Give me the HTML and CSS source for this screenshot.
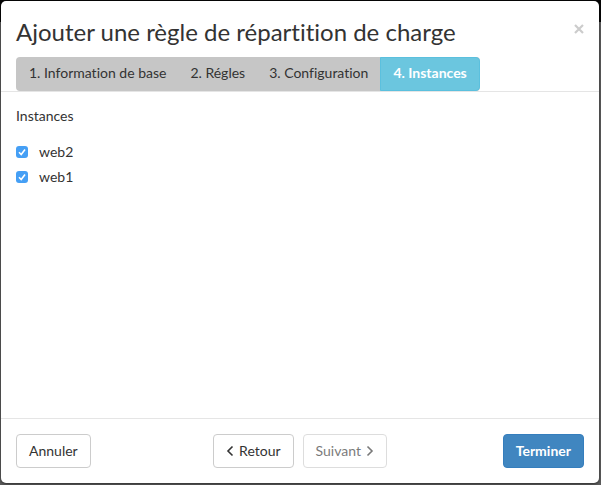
FILE: index.html
```html
<!DOCTYPE html>
<html lang="fr">
<head>
<meta charset="utf-8">
<title>Ajouter une règle de répartition de charge</title>
<link rel="stylesheet" href="styles.css">
</head>
<body>
<form class="modal" role="dialog" aria-labelledby="title">
  <header class="modal-header">
    <div class="title-row">
      <h1 id="title">Ajouter une règle de répartition de charge</h1>
      <button type="button" class="close" aria-label="Fermer"><svg width="10" height="10" viewBox="0 0 10 10"><path d="M1 1l8 8M9 1l-8 8"/></svg></button>
    </div>
    <ol class="steps">
      <li>1. Information de base</li>
      <li>2. Régles</li>
      <li>3. Configuration</li>
      <li class="active" aria-current="step">4. Instances</li>
    </ol>
  </header>
  <fieldset class="modal-body">
    <legend>Instances</legend>
    <label class="choice"><input type="checkbox" checked>web2</label>
    <label class="choice"><input type="checkbox" checked>web1</label>
  </fieldset>
  <footer class="modal-footer">
    <button type="button" class="btn">Annuler</button>
    <div class="pager">
      <button type="button" class="btn"><svg width="8" height="12" viewBox="0 0 8 12"><path d="M6.5 1.5L2 6l4.500 4.500"/></svg>Retour</button>
      <button type="button" class="btn" disabled>Suivant<svg width="8" height="12" viewBox="0 0 8 12"><path d="M1.500 1.500L6 6l-4.500 4.500"/></svg></button>
    </div>
    <button type="submit" class="btn primary">Terminer</button>
  </footer>
</form>
</body>
</html>
```
FILE: styles.css
```css
* { box-sizing: border-box; }
body {
  margin: 0;
  min-height: 100vh;
  padding: 1px 2px 2px 1px;
  display: flex;
  background: linear-gradient(#050506 22px, #5c5c5c 22px);
  color: #333;
  font: 14px/20px Lato, "Liberation Sans", sans-serif;
  font-variant-ligatures: none;
}
.modal {
  flex: 1;
  display: flex;
  flex-direction: column;
  background: #fff;
  border-radius: 5px;
  box-shadow: 0 1px 3px rgba(0, 0, 0, .5);
}
.modal-header {
  padding: 15px 15px 0;
  border-bottom: 1px solid #e5e5e5;
}
.title-row {
  display: flex;
  justify-content: space-between;
  align-items: flex-start;
  margin-bottom: 9px;
}
h1 {
  margin: 0;
  font-size: 24px;
  line-height: 32px;
  font-weight: 400;
}
.close {
  padding: 8px 0 0;
  border: 0;
  background: none;
}
svg {
  display: block;
  fill: none;
  stroke: currentColor;
  stroke-width: 1.6;
}
.close svg {
  color: #ccc;
  stroke-width: 2.2;
}
.steps {
  display: flex;
  width: fit-content;
  margin: 0;
  padding: 0 0 0 1px;
  list-style: none;
  background: #c6c6c6;
  border-radius: 4px;
}
.steps li { padding: 6px 12px 8px; }
.steps .active {
  padding: 5px 12px 7px;
  border: 1px solid #5bc0de;
  border-radius: 0 4px 4px 0;
  background: #6bc6df;
  color: #fff;
  font-weight: 700;
}
.modal-body {
  flex: 1;
  min-width: 0;
  margin: 0;
  padding: 14px 15px;
  border: 0;
}
legend {
  float: left;
  width: 100%;
  margin-bottom: 16px;
  padding: 0;
}
.choice {
  clear: both;
  display: flex;
  align-items: center;
  gap: 11px;
  margin-bottom: 5px;
}
.choice input {
  appearance: none;
  width: 12px;
  height: 12px;
  margin: 0;
  border-radius: 3px;
  background: #459ff5 url("data:image/svg+xml,%3Csvg xmlns='http://www.w3.org/2000/svg' viewBox='0 0 12 12'%3E%3Cpath d='M3 6.3l2.200 2.200L9 3.500' fill='none' stroke='white' stroke-width='1.6'/%3E%3C/svg%3E");
}
.modal-footer {
  display: grid;
  grid-template-columns: 1fr auto 1fr;
  padding: 15px;
  border-top: 1px solid #e5e5e5;
}
.modal-footer > .btn { justify-self: start; }
.modal-footer > .primary { justify-self: end; }
.pager {
  display: flex;
  gap: 9px;
}
.btn {
  display: flex;
  align-items: center;
  gap: 5px;
  padding: 6px 12px;
  border: 1px solid #ccc;
  border-radius: 4px;
  background: #fff;
  color: #333;
  font: inherit;
}
.btn:disabled { opacity: .65; }
.btn.primary {
  border-color: #357ebd;
  background: #4086c0;
  color: #fff;
  font-weight: 700;
}
```
